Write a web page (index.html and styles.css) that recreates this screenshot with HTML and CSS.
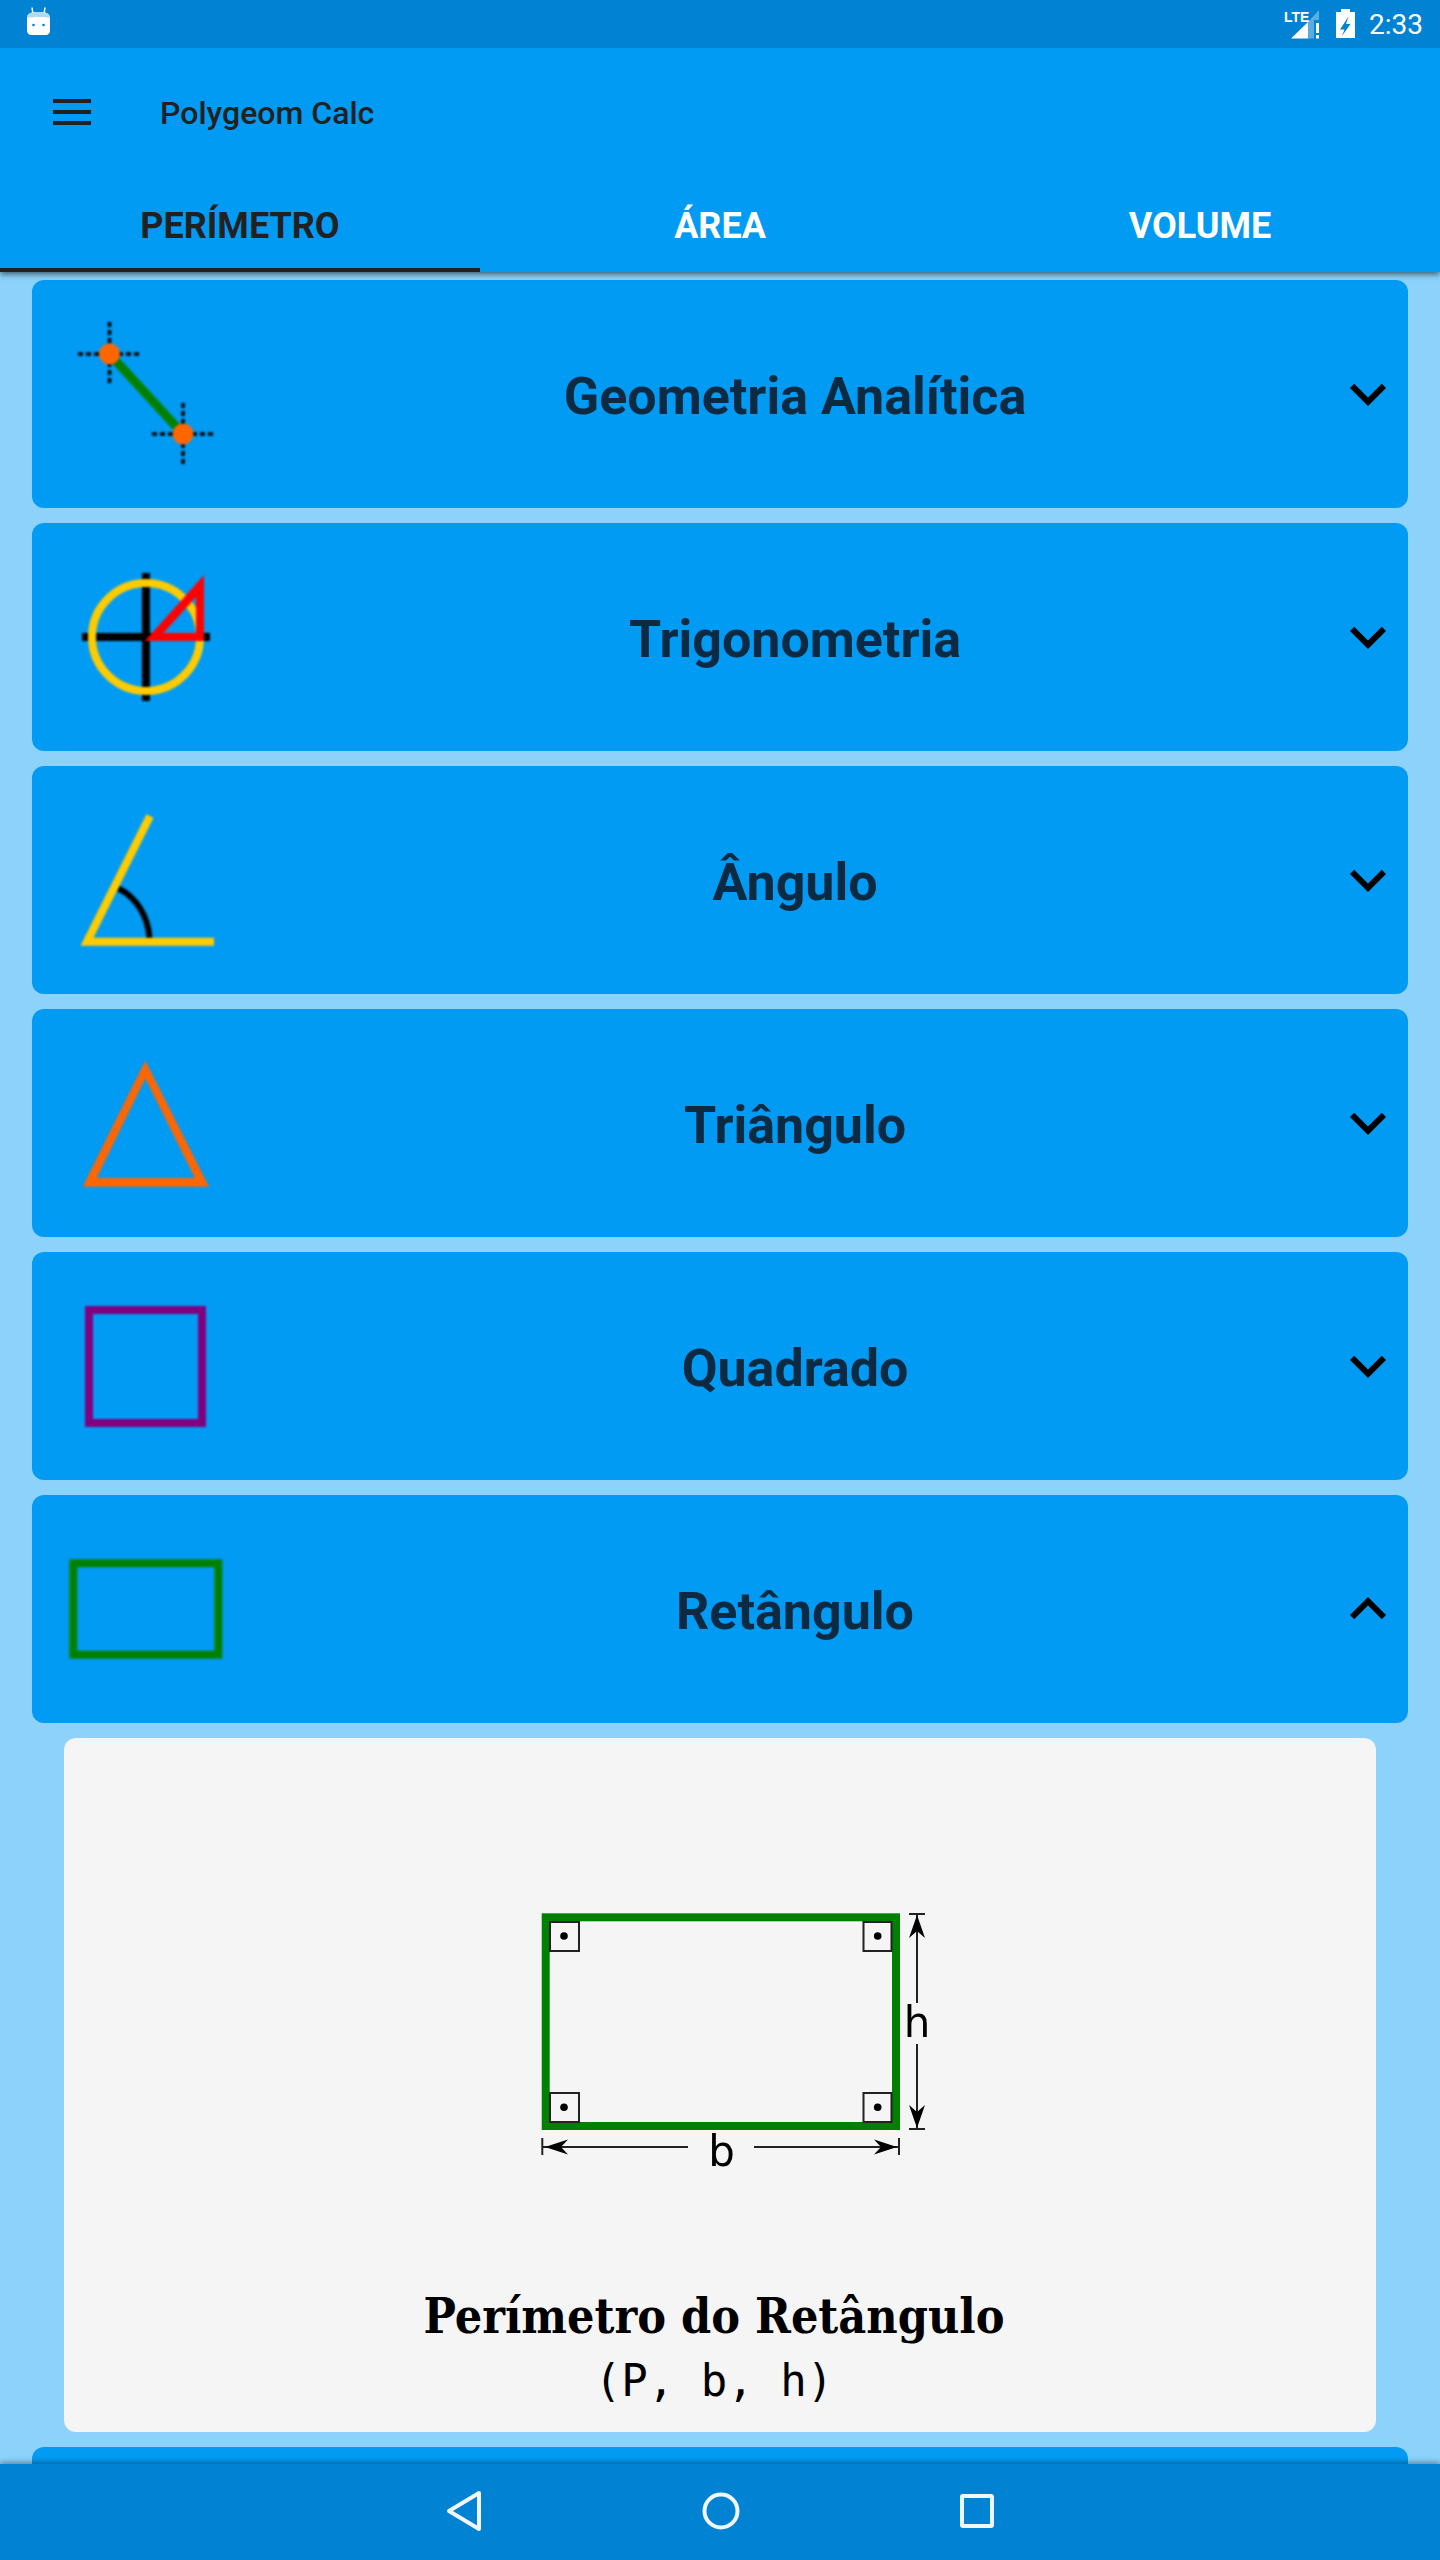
FILE: index.html
```html
<!DOCTYPE html>
<html lang="en">
<head>
  <meta charset="UTF-8">
  <title>Polygeom Calc</title>
  <link rel="stylesheet" href="styles.css">
</head>
<body>
  <div class="wrap">

    <header class="top">
      <section class="status">
        <svg class="status_robot" width="28" height="32" viewBox="0 0 28 32">
          <path d="M8 3.500 9 10M21 3.500 20 10" stroke="#fff" stroke-width="1.500" fill="none"/>
          <path d="M3 14c0-4 3-6 11.500-6S26 10 26 14v13c0 2-2 4-4 4H7c-2 0-4-2-4-4z" fill="#fff"/>
          <path d="M3 14c0-4 3-6 11.500-6S26 10 26 14c0 0-4-1-11.500-1S3 14 3 14z" fill="#b3d9f2"/>
          <circle cx="9.500" cy="21" r="1.300" fill="#0282d2"/>
          <circle cx="19.500" cy="21" r="1.300" fill="#0282d2"/>
        </svg>
        <svg class="status_icons" width="76" height="48" viewBox="1284 0 76 48">
          <text x="1284" y="22" class="status_lte">LTE</text>
          <path d="M1291 38.500 1308 22v16.500z" fill="#fff"/>
          <path d="M1308 22 1319 10v10h-5v18.500h-6z" fill="#fff" fill-opacity=".35"/>
          <path d="M1316 23h3v10h-3zM1316 35h3v3.500h-3z" fill="#fff"/>
          <path d="M1336 12h5V9h9v3h5v26h-19z" fill="#fff"/>
          <path d="M1348.500 16.500 1340 29.500h4.500l-2.500 6.500 8.500-12h-4.500z" fill="#0282d2"/>
        </svg>
        <span class="status_time">2:33</span>
      </section>
      <section class="toolbar">
        <div class="burger"><i></i><i></i><i></i></div>
        <span class="toolbar_title">Polygeom Calc</span>
      </section>
      <nav class="tabs">
        <a class="tab tab_active">PERÍMETRO</a>
        <a class="tab">ÁREA</a>
        <a class="tab">VOLUME</a>
      </nav>
    </header>

    <main class="list">
      <section class="card">
        <svg class="card_icon" viewBox="0 0 226 228">
          <path d="M46 74h63M77.500 42v63M120 154h62M151 123v62" stroke="#000" stroke-width="3.500" stroke-dasharray="5 3" fill="none"/>
          <path d="M77.500 74 151 154" stroke="#008000" stroke-width="9" fill="none"/>
          <circle cx="77.500" cy="74" r="10.500" fill="#ff6600"/>
          <circle cx="151" cy="154" r="10.500" fill="#ff6600"/>
        </svg>
        <h2 class="card_title">Geometria Analítica</h2>
        <svg class="chevron" viewBox="0 0 24 24"><path d="M7.410 8.590 12 13.170l4.590-4.580L18 10l-6 6-6-6z"/></svg>
      </section>

      <section class="card">
        <svg class="card_icon" viewBox="0 0 226 228">
          <path d="M50 114h128M114 50v128" stroke="#000" stroke-width="8" fill="none"/>
          <circle cx="114" cy="114" r="54" stroke="#ffcc00" stroke-width="8" fill="none"/>
          <path d="M113 118 172 52v66zM131.500 110H164V74z" fill="#f00" fill-rule="evenodd"/>
        </svg>
        <h2 class="card_title">Trigonometria</h2>
        <svg class="chevron" viewBox="0 0 24 24"><path d="M7.410 8.590 12 13.170l4.590-4.580L18 10l-6 6-6-6z"/></svg>
      </section>

      <section class="card">
        <svg class="card_icon" viewBox="0 0 226 228">
          <path d="M86.500 122.500C104 131 116 150 117.500 172" stroke="#000" stroke-width="6" fill="none"/>
          <path d="M118 50 55 175.700H182" stroke="#ffcc00" stroke-width="8" fill="none"/>
        </svg>
        <h2 class="card_title">Ângulo</h2>
        <svg class="chevron" viewBox="0 0 24 24"><path d="M7.410 8.590 12 13.170l4.590-4.580L18 10l-6 6-6-6z"/></svg>
      </section>

      <section class="card">
        <svg class="card_icon" viewBox="0 0 226 228">
          <path d="M113.300 51.700 50.700 177.700H177zM113.300 69.300 64.700 169H163z" fill="#ff6600" fill-rule="evenodd"/>
        </svg>
        <h2 class="card_title">Triângulo</h2>
        <svg class="chevron" viewBox="0 0 24 24"><path d="M7.410 8.590 12 13.170l4.590-4.580L18 10l-6 6-6-6z"/></svg>
      </section>

      <section class="card">
        <svg class="card_icon" viewBox="0 0 226 228">
          <rect x="57" y="58" width="113" height="113" stroke="#800080" stroke-width="8" fill="none"/>
        </svg>
        <h2 class="card_title">Quadrado</h2>
        <svg class="chevron" viewBox="0 0 24 24"><path d="M7.410 8.590 12 13.170l4.590-4.580L18 10l-6 6-6-6z"/></svg>
      </section>

      <section class="card">
        <svg class="card_icon" viewBox="0 0 226 228">
          <rect x="41.300" y="68.300" width="145" height="91.400" stroke="#008000" stroke-width="8" fill="none"/>
        </svg>
        <h2 class="card_title">Retângulo</h2>
        <svg class="chevron" viewBox="0 0 24 24"><path d="M7.410 15.410 12 10.830l4.590 4.580L18 14l-6-6-6 6z"/></svg>
      </section>

      <article class="panel">
        <svg class="figure" width="440" height="300" viewBox="-20 0 440 300">
          <rect x="25.700" y="27.300" width="350.300" height="208.700" stroke="#008000" stroke-width="8" fill="none"/>
          <g stroke="#222" stroke-width="2" fill="none">
            <rect x="30" y="32" width="29" height="29"/>
            <rect x="343.500" y="32" width="28" height="29"/>
            <rect x="30" y="203" width="29" height="29"/>
            <rect x="343.500" y="203" width="28" height="29"/>
            <path d="M389 24h16M397 24V113M397 154V239M389 239h16M22.300 248v17M379 248v17M22 257H168M234 257H379"/>
          </g>
          <g fill="#000">
            <circle cx="44" cy="46" r="3.800"/>
            <circle cx="357.700" cy="46" r="3.800"/>
            <circle cx="44" cy="217.300" r="3.800"/>
            <circle cx="357.700" cy="217.300" r="3.800"/>
            <path d="M397 25 405 48 397 41 389 48zM397 238 405 215 397 222 389 215zM25 257 48 249.500 41 257 48 264.500zM377 257 354 249.500 361 257 354 264.500z"/>
          </g>
          <text x="397" y="146.700" class="figure_label">h</text>
          <text x="201.700" y="276" class="figure_label">b</text>
        </svg>
        <h3 class="panel_title">Perímetro do Retângulo</h3>
        <p class="panel_vars">(P, b, h)</p>
      </article>

      <section class="card"></section>
    </main>

    <footer class="navbar">
      <svg width="36" height="42" viewBox="0 0 36 42"><path d="M33 3 3 21l30 18z" stroke="#f0f6fb" stroke-width="4" stroke-linejoin="round" fill="none"/></svg>
      <svg width="38" height="38" viewBox="0 0 38 38"><circle cx="19" cy="19" r="16.500" stroke="#f0f6fb" stroke-width="4" fill="none"/></svg>
      <svg width="34" height="34" viewBox="0 0 34 34"><rect x="2" y="2" width="30" height="30" rx="1" stroke="#f0f6fb" stroke-width="4" fill="none"/></svg>
    </footer>

  </div>
</body>
</html>
```

FILE: styles.css
```css
body{
  margin: 0;
  padding: 0;
}
.wrap{
  width: 1440px;
  height: 2560px;
  display: flex;
  flex-direction: column;
  background: #8cd2fb;
  overflow: hidden;
  font-family: Roboto, sans-serif;
}
.top{
  position: relative;
  z-index: 2;
  background: #029bf3;
  box-shadow: 0 2px 6px rgba(0,0,0,.6);
}
.status{
  height: 48px;
  display: flex;
  align-items: center;
  background: #0282d2;
  color: #fff;
}
.status_robot{
  margin-left: 24px;
  align-self: flex-start;
  margin-top: 4px;
}
.status_icons{
  margin-left: auto;
}
.status_lte{
  font-family: "Liberation Sans", sans-serif;
  font-weight: bold;
  font-size: 14px;
  fill: #fff;
}
.status_time{
  width: 56px;
  margin: 0 15px 0 9px;
  font-size: 28px;
}
.toolbar{
  height: 128px;
  display: flex;
  align-items: center;
  padding-left: 53px;
}
.burger{
  width: 38px;
  display: flex;
  flex-direction: column;
  gap: 7px;
  margin-right: 69px;
}
.burger i{
  display: block;
  height: 4px;
  background: #212121;
}
.toolbar_title{
  padding-top: 2px;
  font-size: 32px;
  font-weight: 500;
  color: #212121;
}
.tabs{
  display: grid;
  grid-template-columns: repeat(3, 1fr);
  height: 96px;
}
.tab{
  display: flex;
  align-items: center;
  justify-content: center;
  font-size: 36px;
  font-weight: 700;
  color: #fff;
  box-sizing: border-box;
  padding-top: 8px;
  border-bottom: 4px solid transparent;
}
.tab_active{
  color: #212121;
  border-bottom-color: #212121;
}
.list{
  flex: 1;
  min-height: 0;
  display: flex;
  flex-direction: column;
  gap: 15px;
  padding: 8px 32px 0;
  overflow: hidden;
}
.card{
  flex: none;
  height: 228px;
  display: flex;
  align-items: center;
  background: #029bf3;
  border-radius: 12px;
}
.card_icon{
  flex: none;
  width: 226px;
  height: 228px;
  filter: blur(.8px);
}
.card_title{
  flex: 1;
  margin: 0;
  padding-top: 4px;
  text-align: center;
  font-size: 52px;
  font-weight: 700;
  color: #0c2a42;
}
.chevron{
  flex: none;
  width: 72px;
  height: 72px;
  margin-right: 4px;
}
.panel{
  flex: none;
  height: 694px;
  margin: 0 32px;
  box-sizing: border-box;
  padding-top: 152px;
  display: flex;
  flex-direction: column;
  align-items: center;
  background: #f5f5f5;
  border-radius: 12px;
}
.figure{
  flex: none;
  filter: blur(.6px);
}
.figure_label{
  font-family: "DejaVu Sans", sans-serif;
  font-size: 42px;
  text-anchor: middle;
}
.panel_title{
  margin: 96px 12px 0 0;
  font-family: "DejaVu Serif Condensed", "DejaVu Serif", serif;
  font-size: 48px;
  font-weight: 700;
  line-height: 60px;
  color: #000;
}
.panel_vars{
  margin: 5px 12px 0 0;
  font-family: "DejaVu Sans Mono", monospace;
  font-size: 44px;
  line-height: 60px;
  color: #000;
}
.navbar{
  position: relative;
  z-index: 2;
  flex: none;
  height: 96px;
  box-sizing: border-box;
  padding-bottom: 2px;
  display: flex;
  align-items: center;
  justify-content: center;
  gap: 220px;
  background: #0282d2;
  box-shadow: 0 -2px 5px rgba(0,0,0,.35);
}
```
